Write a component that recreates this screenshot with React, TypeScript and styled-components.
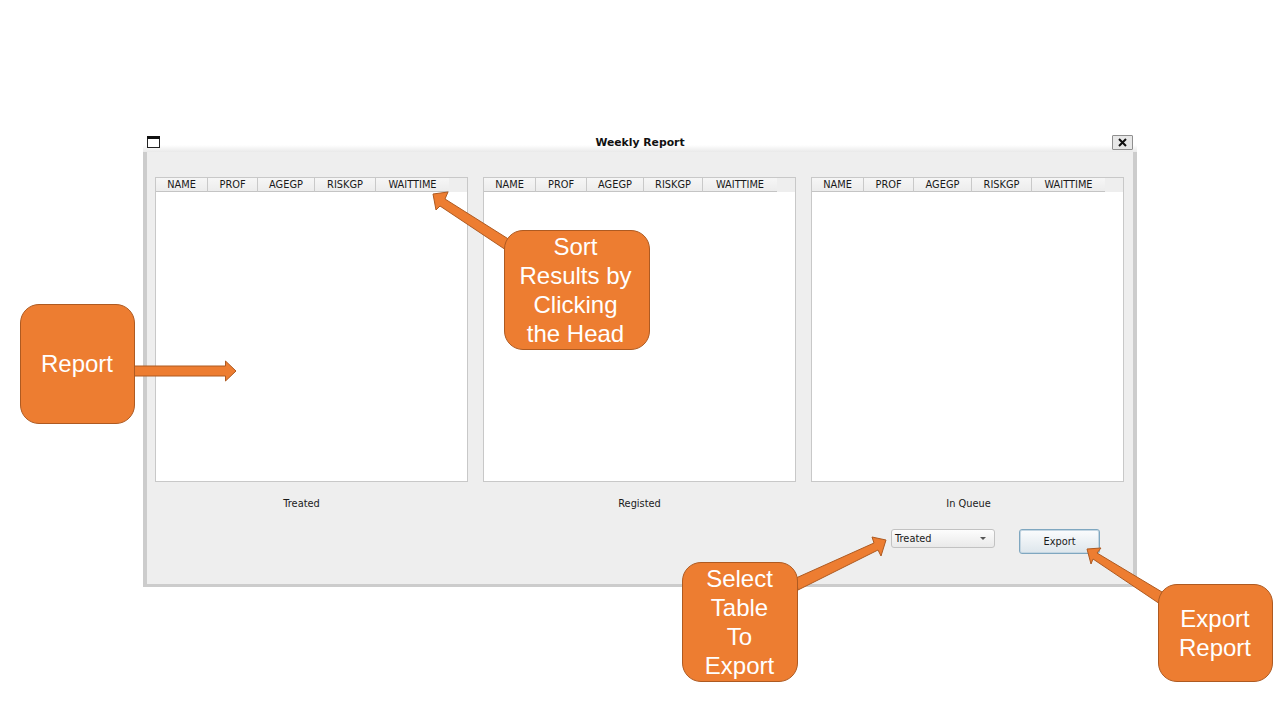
import React from 'react'
import styled, { createGlobalStyle } from 'styled-components'

const GlobalStyle = createGlobalStyle`
  html, body {
    margin: 0;
    padding: 0;
    background: #fff;
  }
`

const Slide = styled.div`
  position: relative;
  width: 1280px;
  height: 720px;
  overflow: hidden;
  padding: 135px 0 0 143px;
  box-sizing: border-box;
  font-family: 'DejaVu Sans', sans-serif;
  color: #1a1a1a;
`

const Window = styled.div`
  width: 994px;
`

const TitleBar = styled.div`
  position: relative;
  display: flex;
  align-items: flex-start;
  justify-content: space-between;
  height: 17px;
  padding: 0 4px;
  background: linear-gradient(#fff 0, #fff 10px, #e9e9e9 17px);
`

const Title = styled.div`
  position: absolute;
  left: 0;
  right: 0;
  top: 1px;
  text-align: center;
  font-size: 10.8px;
  line-height: 14px;
  font-weight: 700;
  color: #111;
`

const WindowIcon = styled.svg`
  width: 13px;
  height: 12px;
  margin-top: 1px;
`

const CloseButton = styled.div`
  display: flex;
  align-items: center;
  justify-content: center;
  width: 19px;
  height: 13px;
  border: 1px solid #8f8f8f;
  border-radius: 1px;
  background: #e8e8e8;
`

const Body = styled.div`
  height: 435px;
  box-sizing: border-box;
  border: 4px solid #cccccc;
  border-top: none;
  border-bottom-width: 3px;
  background: #eeeeee;
  padding: 25px 9px 0 8px;
`

const Tables = styled.div`
  display: grid;
  grid-template-columns: repeat(3, 313px);
  column-gap: 15px;
`

const TablePanel = styled.div`
  height: 305px;
  box-sizing: border-box;
  border: 1px solid #c8c8c8;
  background: #fff;
`

const HeaderRow = styled.div`
  display: flex;
  height: 14px;
  background: #eeeeee;
`

const HeaderCell = styled.div<{ $width: number }>`
  width: ${({ $width }) => $width}px;
  height: 14px;
  box-sizing: border-box;
  border-right: 1px solid #c9c9c9;
  border-bottom: 1px solid #c4c4c4;
  background: linear-gradient(#f6f6f6, #ececec);
  font-size: 9.8px;
  line-height: 14px;
  text-align: center;
  &:last-child {
    border-right: none;
  }
`

const Labels = styled.div`
  display: grid;
  grid-template-columns: repeat(3, 313px);
  column-gap: 15px;
  margin-top: 15px;
`

const TableLabel = styled.div<{ $shift: number }>`
  font-size: 9.8px;
  line-height: 14px;
  text-align: center;
  transform: translateX(${({ $shift }) => $shift}px);
`

const Footer = styled.div`
  display: flex;
  justify-content: flex-end;
  align-items: flex-start;
  gap: 24px;
  margin-top: 18px;
  padding-right: 24px;
`

const Combo = styled.div`
  display: flex;
  align-items: center;
  justify-content: space-between;
  width: 104px;
  height: 19px;
  box-sizing: border-box;
  padding: 0 8px 0 3px;
  border: 1px solid #c2c2c2;
  border-radius: 3px;
  background: linear-gradient(#fdfdfd, #e9e9e9);
  font-size: 9.8px;
`

const Caret = styled.span`
  width: 0;
  height: 0;
  border-left: 3.5px solid transparent;
  border-right: 3.5px solid transparent;
  border-top: 3.5px solid #555;
`

const ExportButton = styled.div`
  width: 81px;
  height: 25px;
  box-sizing: border-box;
  border: 1px solid #7fa7c0;
  border-radius: 3px;
  box-shadow: inset 0 0 0 1px #c4d6e2;
  background: linear-gradient(#fbfcfd, #dde6ec);
  font-size: 9.8px;
  line-height: 24px;
  text-align: center;
`

const ArrowLayer = styled.svg`
  position: absolute;
  left: 0;
  top: 0;
  width: 1280px;
  height: 720px;
`

const Callout = styled.div<{ $x: number; $y: number; $w: number; $h: number; $pad?: string }>`
  position: absolute;
  left: ${({ $x }) => $x}px;
  top: ${({ $y }) => $y}px;
  width: ${({ $w }) => $w}px;
  height: ${({ $h }) => $h}px;
  box-sizing: border-box;
  padding: ${({ $pad }) => $pad ?? '0 1px 0 0'};
  display: flex;
  align-items: center;
  justify-content: center;
  text-align: center;
  border: 1px solid #ae5a21;
  border-radius: 19px;
  background: #ed7d31;
  color: #fff;
  font-family: 'Liberation Sans', Arial, sans-serif;
  font-size: 24px;
  line-height: 29px;
`

const columns = [
  [{ n: 'NAME', w: 52 }, { n: 'PROF', w: 50 }, { n: 'AGEGP', w: 57 }, { n: 'RISKGP', w: 61 }, { n: 'WAITTIME', w: 73 }],
  [{ n: 'NAME', w: 52 }, { n: 'PROF', w: 51 }, { n: 'AGEGP', w: 57 }, { n: 'RISKGP', w: 59 }, { n: 'WAITTIME', w: 74 }],
  [{ n: 'NAME', w: 52 }, { n: 'PROF', w: 50 }, { n: 'AGEGP', w: 58 }, { n: 'RISKGP', w: 60 }, { n: 'WAITTIME', w: 73 }]
]

const labels = [
  { text: 'Treated', shift: -10 },
  { text: 'Registed', shift: 0 },
  { text: 'In Queue', shift: 1 }
]

const arrows = [
  '134,366 225.5,366 225.5,361 236,371 225.5,381 225.5,376 134,376',
  '433,194 448,192 445,199 510,240 506,250 440,206 436,210',
  '886,540 872,537 874,543 796,578 798,590 878,550 881,556',
  '1087,549 1101,548 1097,553 1162,592 1160,604 1093,559 1091,564'
]

export default function App() {
  return (
    <Slide>
      <GlobalStyle />
      <Window>
        <TitleBar>
          <WindowIcon viewBox="0 0 13 12">
            <rect x="0.5" y="0.5" width="12" height="11" fill="#fff" stroke="#222" strokeWidth="1" />
            <rect x="0" y="0" width="13" height="3" fill="#111" />
          </WindowIcon>
          <Title>Weekly Report</Title>
          <CloseButton>
            <svg width="9" height="9" viewBox="0 0 9 9">
              <path d="M1 1 L8 8 M8 1 L1 8" stroke="#111" strokeWidth="2" />
            </svg>
          </CloseButton>
        </TitleBar>
        <Body>
          <Tables>
            {columns.map((cols, i) => (
              <TablePanel key={i}>
                <HeaderRow>
                  {cols.map(c => (
                    <HeaderCell key={c.n} $width={c.w}>
                      {c.n}
                    </HeaderCell>
                  ))}
                </HeaderRow>
              </TablePanel>
            ))}
          </Tables>
          <Labels>
            {labels.map(l => (
              <TableLabel key={l.text} $shift={l.shift}>
                {l.text}
              </TableLabel>
            ))}
          </Labels>
          <Footer>
            <Combo>
              Treated
              <Caret />
            </Combo>
            <ExportButton>Export</ExportButton>
          </Footer>
        </Body>
      </Window>

      <ArrowLayer viewBox="0 0 1280 720">
        {arrows.map(points => (
          <polygon key={points} points={points} fill="#ed7d31" stroke="#ae5a21" strokeWidth="1" />
        ))}
      </ArrowLayer>

      <Callout $x={20} $y={304} $w={115} $h={120} $pad="0 1px 1px 0">
        Report
      </Callout>
      <Callout $x={504} $y={230} $w={146} $h={120} $pad="0 3px 0 0">
        Sort
        <br />
        Results by
        <br />
        Clicking
        <br />
        the Head
      </Callout>
      <Callout $x={682} $y={562} $w={116} $h={120}>
        Select
        <br />
        Table
        <br />
        To
        <br />
        Export
      </Callout>
      <Callout $x={1158} $y={584} $w={115} $h={98}>
        Export
        <br />
        Report
      </Callout>
    </Slide>
  )
}
